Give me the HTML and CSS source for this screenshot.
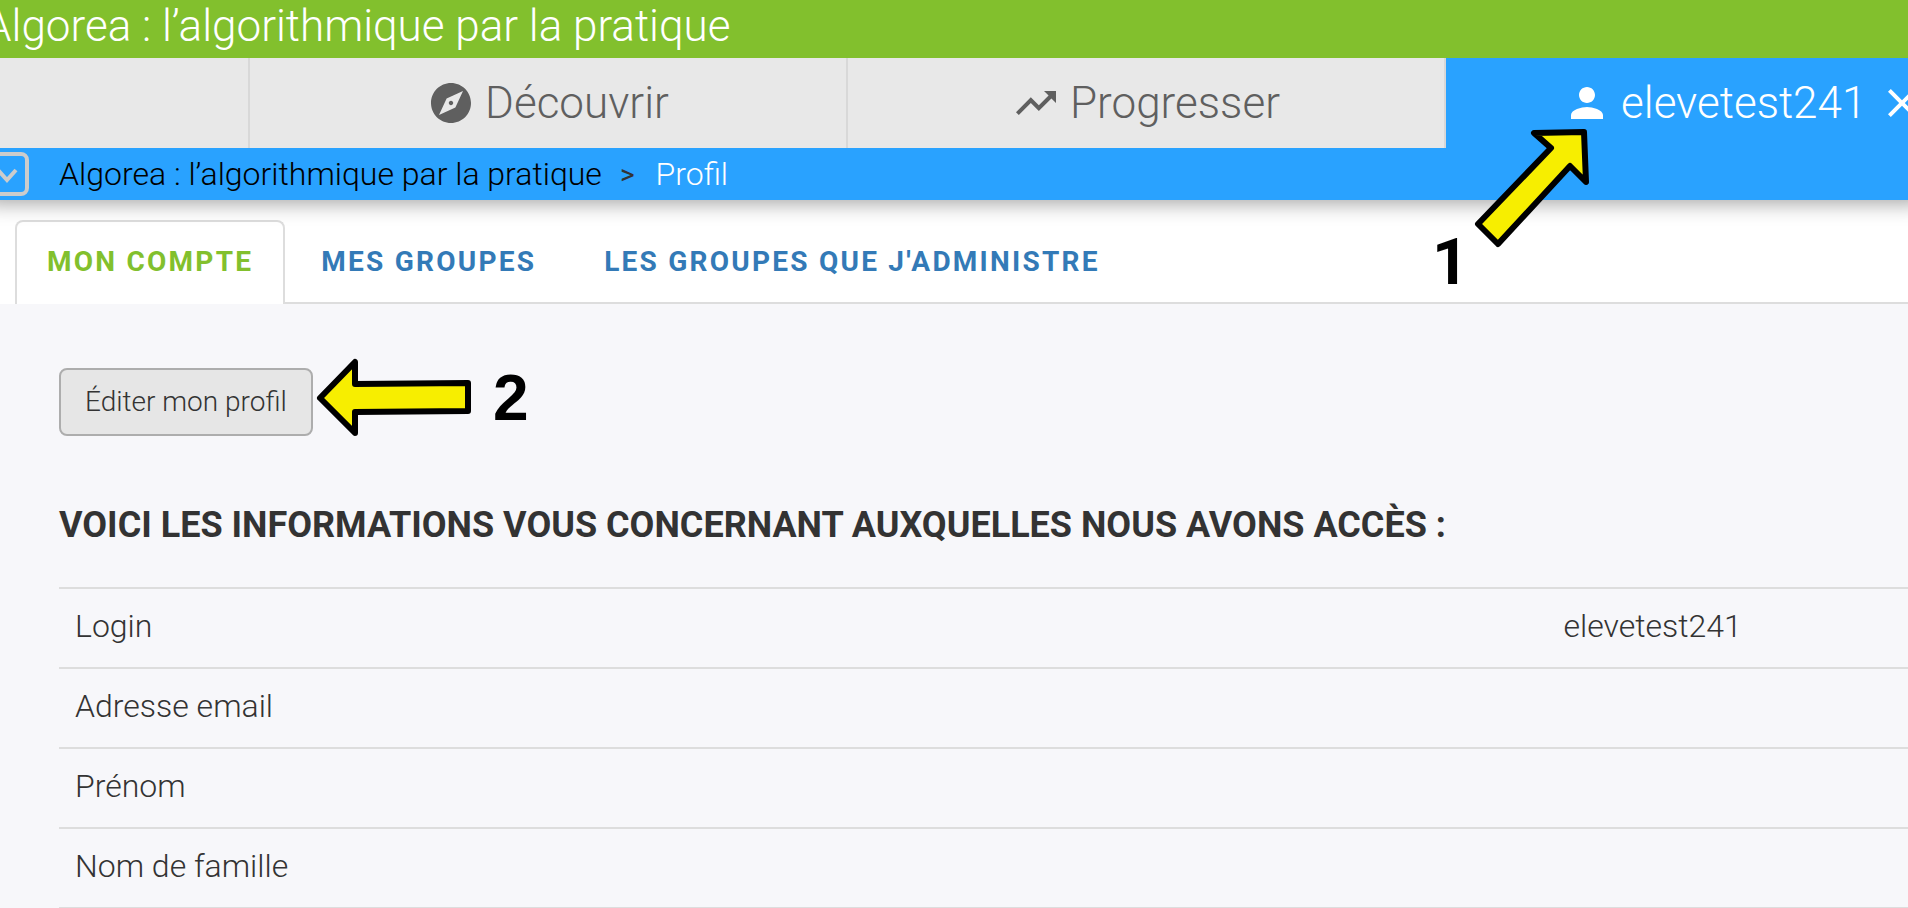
FILE: index.html
```html
<!DOCTYPE html>
<html lang="fr">
<head>
<meta charset="utf-8">
<title>Algorea : l’algorithmique par la pratique</title>
<meta name="viewport" content="width=device-width, initial-scale=1">
<link rel="stylesheet" href="styles.css">
</head>
<body>
<div class="page">
  <header class="masthead"><span class="masthead-title">Algorea : l’algorithmique par la pratique</span></header>

  <nav class="mainnav" aria-label="Navigation principale">
    <div class="mainnav-item"></div>
    <a class="mainnav-item" href="#decouvrir">
      <svg class="icon" viewBox="0 0 24 24" aria-hidden="true"><path d="M12 10.9c-.61 0-1.1.49-1.1 1.1s.49 1.1 1.1 1.1c.61 0 1.1-.49 1.1-1.1s-.49-1.1-1.1-1.1zM12 2C6.48 2 2 6.48 2 12s4.48 10 10 10 10-4.48 10-10S17.52 2 12 2zm2.190 12.190L6 18l3.810-8.190L18 6l-3.810 8.190z"/></svg>
      <span>Découvrir</span>
    </a>
    <a class="mainnav-item" href="#progresser">
      <svg class="icon" viewBox="0 0 24 24" aria-hidden="true"><path d="M16 6l2.290 2.290-4.880 4.880-4-4L2 16.590 3.410 18l6-6 4 4 6.300-6.290L22 12V6z"/></svg>
      <span>Progresser</span>
    </a>
    <div class="mainnav-item mainnav-user">
      <a class="user-link" href="#profil">
        <svg class="icon" viewBox="0 0 24 24" aria-hidden="true"><path d="M12 12c2.210 0 4-1.790 4-4s-1.790-4-4-4-4 1.790-4 4 1.790 4 4 4zm0 2c-2.670 0-8 1.340-8 4v2h16v-2c0-2.660-5.330-4-8-4z"/></svg>
        <span>elevetest241</span>
      </a>
      <button class="close" type="button" aria-label="Fermer">
        <svg class="icon" viewBox="0 0 24 24" aria-hidden="true"><path d="M19 6.410L17.590 5 12 10.590 6.410 5 5 6.410 10.590 12 5 17.590 6.410 19 12 13.410 17.590 19 19 17.590 13.410 12z"/></svg>
      </button>
    </div>
  </nav>

  <div class="crumbbar">
    <button class="toggle" type="button" aria-label="Ouvrir le menu">
      <svg class="toggle-icon" viewBox="0 0 36 36" aria-hidden="true"><path d="M9 14l9 10 9-10"/></svg>
    </button>
    <nav class="crumbs" aria-label="Fil d’Ariane">
      <a class="crumb" href="#accueil">Algorea : l’algorithmique par la pratique</a>
      <span class="crumb-sep">&gt;</span>
      <span class="crumb-current">Profil</span>
    </nav>
  </div>

  <nav class="tabs" aria-label="Sections du profil">
    <div class="tabs-list">
      <a class="tab tab-active" href="#compte">Mon compte</a>
      <a class="tab" href="#groupes">Mes groupes</a>
      <a class="tab" href="#administre">Les groupes que j'administre</a>
    </div>
  </nav>

  <main class="content">
    <button class="edit" type="button">Éditer mon profil</button>
    <h1 class="heading">Voici les informations vous concernant auxquelles nous avons accès :</h1>
    <table class="infos">
      <tbody>
        <tr><th scope="row">Login</th><td>elevetest241</td></tr>
        <tr><th scope="row">Adresse email</th><td></td></tr>
        <tr><th scope="row">Prénom</th><td></td></tr>
        <tr><th scope="row">Nom de famille</th><td></td></tr>
      </tbody>
    </table>
  </main>

  <div class="note note-one">
    <svg class="note-arrow" width="120" height="124" viewBox="1472 126 120 124" aria-hidden="true"><path d="M1534 133L1584 132L1586 182L1570 166L1498 244L1478 224L1551 148Z"/></svg>
    <span class="note-number">1</span>
  </div>
  <div class="note note-two">
    <svg class="note-arrow" width="160" height="84" viewBox="314 356 160 84" aria-hidden="true"><path d="M320 398L355 362L355 384L468 383L468 411L355 412L355 433Z"/></svg>
    <span class="note-number">2</span>
  </div>
</div>
</body>
</html>
```

FILE: styles.css
```css
* { box-sizing: border-box; }

body {
  margin: 0;
  background: #f7f7fa;
  color: #333;
  font-family: Roboto, "Liberation Sans", sans-serif;
  font-weight: 300;
  font-size: 32px;
}

a { color: inherit; text-decoration: none; }

button { font: inherit; color: inherit; margin: 0; cursor: pointer; }

.page { position: relative; min-height: 100vh; overflow: hidden; }

.masthead {
  height: 58px;
  margin-left: -16px;
  background: #82c02d;
  color: #fff;
  font-size: 44px;
  line-height: 52px;
  white-space: nowrap;
}

.mainnav {
  position: relative;
  z-index: 1;
  display: grid;
  grid-template-columns: 250fr 598fr 598fr 462fr;
  height: 90px;
  color: #5f5f5f;
  font-size: 44px;
}

.mainnav-item {
  display: flex;
  align-items: center;
  justify-content: center;
  gap: 10px;
  min-width: 0;
  background: #e8e8e8;
  border-right: 2px solid #d8d8d8;
}

.mainnav-user {
  justify-content: flex-start;
  gap: 12px;
  padding-left: 117px;
  border-right: 0;
  background: #29a2ff;
  color: #fff;
}

.user-link { display: flex; align-items: center; gap: 10px; }

.icon { display: block; flex: none; width: 48px; height: 48px; fill: currentColor; }

.close { flex: none; padding: 0; border: 0; background: none; }

.crumbbar {
  position: relative;
  display: flex;
  align-items: center;
  gap: 30px;
  height: 52px;
  margin: 0 -15px;
  background: #29a2ff;
  box-shadow: 0 4px 20px rgba(0, 0, 0, 0.35);
}

.toggle {
  width: 44px;
  height: 44px;
  padding: 0;
  border: 4px solid #ccc;
  border-radius: 8px;
  background: none;
}

.toggle-icon { display: block; fill: none; stroke: #ccc; stroke-width: 4; }

.crumbs { display: flex; align-items: center; white-space: nowrap; color: #000; }

.crumb-sep { margin: 0 21px 0 18px; font-size: 28px; font-weight: 400; color: #333; }

.crumb-current { color: #fff; }

.tabs {
  padding: 20px 0 0 15px;
  background: #fff;
  color: #337ab7;
  font-size: 28px;
  font-weight: 700;
  letter-spacing: 0.08em;
  text-transform: uppercase;
  white-space: nowrap;
}

.tabs-list { display: flex; height: 84px; border-bottom: 2px solid #ddd; }

.tab {
  height: 84px;
  margin-right: 4px;
  padding: 0 30px;
  border: 2px solid transparent;
  border-bottom: 0;
  border-radius: 8px 8px 0 0;
  line-height: 80px;
}

.tab-active { border-color: #ddd; background: #fff; color: #82c02d; }

.content { padding: 64px 0 0 59px; }

.edit {
  display: block;
  height: 68px;
  padding: 0 24px 2px;
  border: 2px solid #adadad;
  border-radius: 8px;
  background: #e6e6e6;
  font-size: 28px;
}

.heading {
  margin: 66px 0 38px;
  font-size: 36px;
  line-height: 47px;
  font-weight: 700;
  text-transform: uppercase;
  white-space: nowrap;
}

.infos { width: 100%; border-collapse: collapse; border-bottom: 2px solid #ddd; }

.infos th, .infos td {
  height: 80px;
  padding: 0 16px 4px;
  border-top: 2px solid #ddd;
  text-align: left;
  font-weight: 300;
}

.infos th { width: 80.5%; }

.note {
  position: absolute;
  z-index: 2;
  color: #000;
  font: 700 64px/64px "Liberation Sans", Arial, sans-serif;
}

.note-one { left: 1432px; top: 126px; font-family: Roboto, sans-serif; }
.note-one .note-arrow { margin-left: 40px; }
.note-one .note-number { position: absolute; left: 0; top: 105px; }

.note-two { display: flex; align-items: center; gap: 19px; left: 314px; top: 356px; }

.note-arrow {
  display: block;
  fill: #f7ee00;
  stroke: #000;
  stroke-width: 6;
  stroke-linejoin: round;
}
```
